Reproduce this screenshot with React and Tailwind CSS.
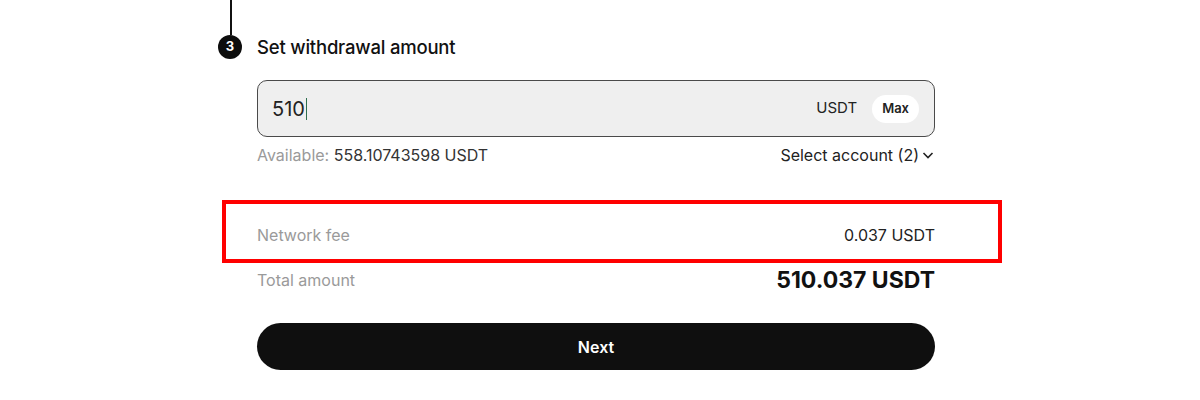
import React from "react";

export default function App() {
  return (
    <div className="w-[1200px] h-[400px] bg-white overflow-hidden" style={{ fontFamily: "Inter, 'Liberation Sans', sans-serif" }}>
      <div className="pl-[218px]">
        <div className="ml-[12px] w-[2px] h-[35px] bg-[#111]" />
        <div className="flex items-center gap-[15px] h-[24px]">
          <div className="w-[24px] h-[24px] rounded-full bg-[#0d0d0d] text-white text-[13px] font-bold flex items-center justify-center">3</div>
          <div className="text-[18.5px] font-medium text-[#111] tracking-[-0.2px] mt-[2px]">Set withdrawal amount</div>
        </div>
        <div className="ml-[39px] w-[678px] mt-[21px]">
          <div className="h-[57px] rounded-[10px] border border-[#4a4a4a] bg-[#efefef] flex items-center pl-[14px] pr-[15px]">
            <div className="flex items-center text-[20px] text-[#222]">
              <span>510</span>
              <span className="w-[1px] h-[22px] bg-[#2f6f4f] ml-[1px]" />
            </div>
            <div className="ml-auto flex items-center gap-[15px]">
              <span className="text-[15px] text-[#222]">USDT</span>
              <span className="h-[28px] px-[10px] rounded-full bg-white text-[13px] font-semibold text-[#222] flex items-center">Max</span>
            </div>
          </div>
          <div className="flex items-center justify-between mt-[8px] h-[20px] text-[16px]">
            <div>
              <span className="text-[#9a9a9a]">Available: </span>
              <span className="text-[#333]">558.10743598 USDT</span>
            </div>
            <div className="flex items-center text-[#222]">
              <span>Select account (2)</span>
              <svg width="14" height="14" viewBox="0 0 14 14" className="ml-[2px]" fill="none" stroke="#222" strokeWidth="1.6">
                <path d="M2.5 5l4.5 4.5L11.5 5" />
              </svg>
            </div>
          </div>
          <div className="relative mt-[60px] h-[20px] flex items-center justify-between text-[16px]">
            <div className="absolute left-[-35px] right-[-67px] top-[-25px] bottom-[-18px] border-[4px] border-[#ff0000]" />
            <span className="text-[#9a9a9a]">Network fee</span>
            <span className="text-[#222]">0.037 USDT</span>
          </div>
          <div className="mt-[25px] h-[20px] flex items-center justify-between">
            <span className="text-[16px] text-[#9a9a9a]">Total amount</span>
            <span className="text-[23px] font-bold text-[#111]">510.037 USDT</span>
          </div>
          <button className="mt-[33px] w-full h-[47px] rounded-full bg-[#0f0f0f] text-white text-[16px] font-semibold">Next</button>
        </div>
      </div>
    </div>
  );
}
